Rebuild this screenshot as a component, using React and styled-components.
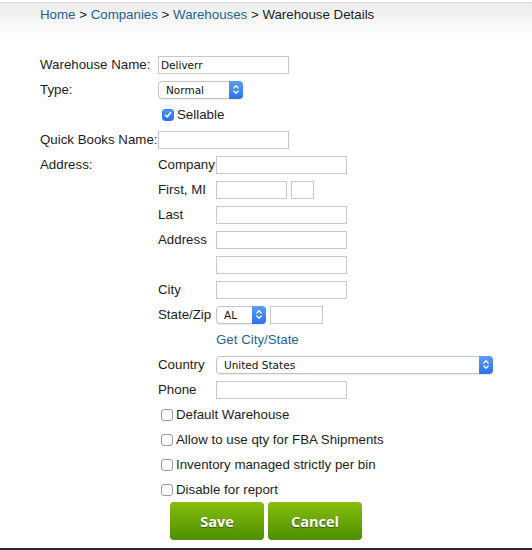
import React from 'react';
import styled, { createGlobalStyle } from 'styled-components';

const GlobalStyle = createGlobalStyle`
  html, body {
    margin: 0;
    padding: 0;
    background: #fff;
  }
  body {
    font-family: "Liberation Sans", Arial, sans-serif;
    font-size: 13.3px;
    color: #1c1c1c;
  }
`;

const Page = styled.div`
  width: 532px;
  height: 550px;
  box-sizing: border-box;
  display: flex;
  flex-direction: column;
  border-bottom: 2px solid #2a2a2a;
`;

const Header = styled.div`
  margin-top: 2px;
  height: 34px;
  box-sizing: border-box;
  border-top: 1px solid #d4d4d4;
  background: linear-gradient(#ececec, #ffffff);
  padding: 4px 0 0 40px;
  line-height: 16px;
`;

const Crumb = styled.a`
  color: #1f6394;
  text-decoration: none;
`;

const Form = styled.div`
  padding: 16px 0 0 40px;
`;

const Row = styled.div`
  display: flex;
  align-items: center;
  height: 25px;
`;

const Label = styled.div`
  width: ${(p) => p.$w || 118}px;
  flex-shrink: 0;
  white-space: nowrap;
`;

const Section = styled.div`
  display: flex;
  align-items: flex-start;
`;

const SectionLabel = styled.div`
  width: 118px;
  flex-shrink: 0;
  line-height: 25px;
`;

const Stack = styled.div`
  display: flex;
  flex-direction: column;
`;

const TextInput = styled.input`
  width: ${(p) => p.$w || 131}px;
  height: 18px;
  box-sizing: border-box;
  margin: 0 ${(p) => p.$mr || 0}px 0 0;
  padding: 0 2px;
  border: 1px solid #c9c9c9;
  border-radius: 0;
  font-family: "DejaVu Sans", sans-serif;
  font-size: 10.5px;
  color: #111;
  outline: none;
`;

const Select = styled.div`
  display: flex;
  align-items: center;
  width: ${(p) => p.$w}px;
  height: 18px;
  box-sizing: border-box;
  margin-right: ${(p) => p.$mr || 0}px;
  padding-left: 7px;
  border: 1px solid #c3c3c3;
  border-radius: 4px;
  background: #fff;
  box-shadow: 0 1px 1px rgba(0, 0, 0, 0.08);
  font-family: "DejaVu Sans", sans-serif;
  font-size: 10.5px;
  color: #111;
`;

const Stepper = styled.span`
  display: flex;
  align-items: center;
  justify-content: center;
  width: 14px;
  height: 18px;
  margin: -1px -1px -1px auto;
  border-radius: 0 4px 4px 0;
  background: linear-gradient(#5b9df9, #2b72ea);
`;

const Arrows = () => (
  <svg width="8" height="11" viewBox="0 0 8 11" fill="none" stroke="#fff" strokeWidth="1.3" strokeLinecap="round" strokeLinejoin="round">
    <path d="M1.8 4 L4 1.8 L6.2 4" />
    <path d="M1.8 7 L4 9.2 L6.2 7" />
  </svg>
);

const Box = styled.span`
  display: inline-flex;
  align-items: center;
  justify-content: center;
  width: 12px;
  height: 12px;
  box-sizing: border-box;
  margin: 0 3px 0 ${(p) => p.$ml || 3}px;
  border-radius: 3px;
  border: 1px solid ${(p) => (p.$checked ? '#2f7bf0' : '#9a9a9a')};
  background: ${(p) => (p.$checked ? 'linear-gradient(#4f95f7, #2a70e8)' : '#fff')};
`;

const CheckRow = styled.label`
  display: flex;
  align-items: center;
  height: 25px;
  margin-left: 118px;
`;

const Checkbox = ({ checked, ml, children }) => (
  <CheckRow>
    <Box $checked={checked} $ml={ml}>
      {checked && (
        <svg width="8" height="8" viewBox="0 0 8 8" fill="none" stroke="#fff" strokeWidth="1.6" strokeLinecap="round" strokeLinejoin="round">
          <path d="M1.5 4.3 L3.2 6 L6.5 1.8" />
        </svg>
      )}
    </Box>
    {children}
  </CheckRow>
);

const Link = styled.a`
  color: #1f6394;
  text-decoration: none;
  margin-left: 58px;
`;

const Buttons = styled.div`
  display: flex;
  gap: 4px;
  margin-left: 130px;
`;

const Button = styled.button`
  width: 94px;
  height: 38px;
  border: none;
  border-radius: 4px;
  background: linear-gradient(#88bd0b, #4d8f00);
  color: #fff;
  font-family: "Open Sans", sans-serif;
  font-weight: bold;
  font-size: 14.5px;
  text-shadow: 0 1px 1px rgba(0, 0, 0, 0.45);
  cursor: pointer;
`;

const App = () => (
  <Page>
    <GlobalStyle />
    <Header>
      <Crumb href="#">Home</Crumb> &gt; <Crumb href="#">Companies</Crumb> &gt;{' '}
      <Crumb href="#">Warehouses</Crumb> &gt; Warehouse Details
    </Header>
    <Form>
      <Row>
        <Label>Warehouse Name:</Label>
        <TextInput defaultValue="Deliverr" />
      </Row>
      <Row>
        <Label>Type:</Label>
        <Select $w={85}>
          Normal
          <Stepper><Arrows /></Stepper>
        </Select>
      </Row>
      <Checkbox checked ml={4}>Sellable</Checkbox>
      <Row>
        <Label>Quick Books Name:</Label>
        <TextInput />
      </Row>
      <Section>
        <SectionLabel>Address:</SectionLabel>
        <Stack>
          <Row>
            <Label $w={58}>Company</Label>
            <TextInput />
          </Row>
          <Row>
            <Label $w={58}>First, MI</Label>
            <TextInput $w={71} $mr={4} />
            <TextInput $w={23} />
          </Row>
          <Row>
            <Label $w={58}>Last</Label>
            <TextInput />
          </Row>
          <Row>
            <Label $w={58}>Address</Label>
            <TextInput />
          </Row>
          <Row>
            <Label $w={58} />
            <TextInput />
          </Row>
          <Row>
            <Label $w={58}>City</Label>
            <TextInput />
          </Row>
          <Row>
            <Label $w={58}>State/Zip</Label>
            <Select $w={50} $mr={4}>
              AL
              <Stepper><Arrows /></Stepper>
            </Select>
            <TextInput $w={53} />
          </Row>
          <Row>
            <Link href="#">Get City/State</Link>
          </Row>
          <Row>
            <Label $w={58}>Country</Label>
            <Select $w={277}>
              United States
              <Stepper><Arrows /></Stepper>
            </Select>
          </Row>
          <Row>
            <Label $w={58}>Phone</Label>
            <TextInput />
          </Row>
        </Stack>
      </Section>
      <Checkbox>Default Warehouse</Checkbox>
      <Checkbox>Allow to use qty for FBA Shipments</Checkbox>
      <Checkbox>Inventory managed strictly per bin</Checkbox>
      <Checkbox>Disable for report</Checkbox>
      <Buttons>
        <Button>Save</Button>
        <Button>Cancel</Button>
      </Buttons>
    </Form>
  </Page>
);

export default App;
